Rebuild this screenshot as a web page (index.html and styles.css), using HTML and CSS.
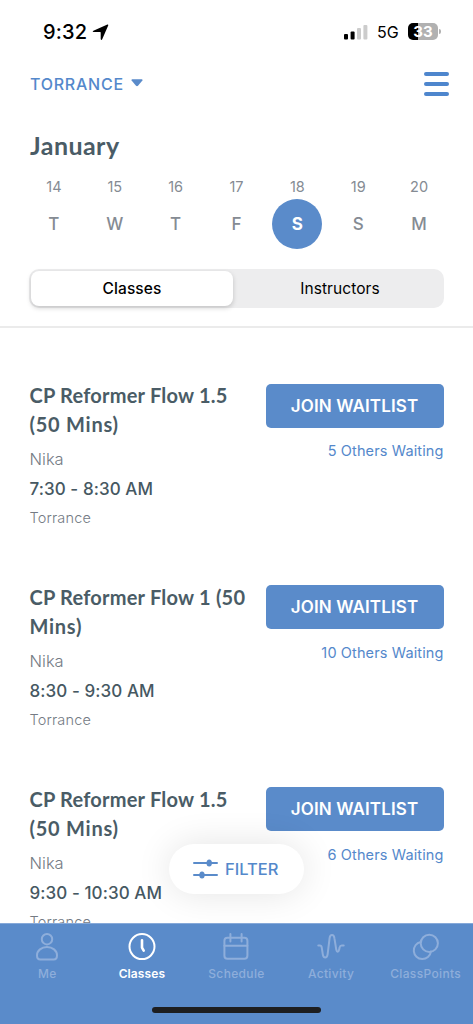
FILE: index.html
```html
<!DOCTYPE html>
<html lang="en">
<head>
<meta charset="utf-8">
<title>Classes</title>
<link rel="stylesheet" href="styles.css">
</head>
<body>
<div class="app">
  <header class="top">
    <div class="status">
      <span class="clock">9:32</span>
      <svg class="loc" width="17" height="17" viewBox="0 0 17 17"><path d="M15.4 .6Q16.5.3 16.2 1.5L10.2 15.3Q9.2 16.9 8.7 15V8.6Q8.7 8.1 8.2 8.1H1.7Q-.2 7.7 1.4 6.7Z"/></svg>
      <svg class="signal" width="25" height="16" viewBox="0 0 25 16"><rect x="0" y="10" width="4" height="5.5" rx="1"/><rect x="6.6" y="7.5" width="4" height="8" rx="1"/><g fill="#ccc"><rect x="13" y="4" width="4" height="11.5" rx="1"/><rect x="19.4" y="1" width="4" height="14.5" rx="1"/></g></svg>
      <span class="net">5G</span>
      <span class="battery"><span class="level">33</span><i class="cap"></i></span>
    </div>
    <div class="bar">
      <span class="place">TORRANCE</span>
      <svg class="caret" width="12" height="8" viewBox="0 0 12 8"><path d="M1.2.3h9.6q1.2.2.6 1.3L7 6.7q-1 .9-2 0L.6 1.6Q0 .5 1.2.3Z"/></svg>
      <div class="menu"><i></i><i></i><i></i></div>
    </div>
    <h1 class="month">January</h1>
    <div class="days">
      <div class="day"><span>14</span><b>T</b></div>
      <div class="day"><span>15</span><b>W</b></div>
      <div class="day"><span>16</span><b>T</b></div>
      <div class="day"><span>17</span><b>F</b></div>
      <div class="day on"><span>18</span><b>S</b></div>
      <div class="day"><span>19</span><b>S</b></div>
      <div class="day"><span>20</span><b>M</b></div>
    </div>
    <div class="segments"><span class="seg active">Classes</span><span class="seg">Instructors</span></div>
  </header>

  <main class="list">
    <article class="item">
      <div class="info"><h2>CP Reformer Flow 1.5<br><span class="wide">(50 Mins)</span></h2><p class="who">Nika</p><p class="time">7:30 - 8:30 AM</p><p class="where">Torrance</p></div>
      <div class="action"><button class="join">JOIN WAITLIST</button><p class="waiting">5 Others Waiting</p></div>
    </article>
    <article class="item">
      <div class="info"><h2>CP Reformer Flow 1 (50<br><span class="wide">Mins)</span></h2><p class="who">Nika</p><p class="time">8:30 - 9:30 AM</p><p class="where">Torrance</p></div>
      <div class="action"><button class="join">JOIN WAITLIST</button><p class="waiting">10 Others Waiting</p></div>
    </article>
    <article class="item">
      <div class="info"><h2>CP Reformer Flow 1.5<br><span class="wide">(50 Mins)</span></h2><p class="who">Nika</p><p class="time">9:30 - 10:30 AM</p><p class="where">Torrance</p></div>
      <div class="action"><button class="join">JOIN WAITLIST</button><p class="waiting">6 Others Waiting</p></div>
    </article>
    <div class="filter">
      <svg width="25" height="20" viewBox="0 0 25 20"><path d="M1 4h23M1 16h23" stroke="#5a8bca" stroke-width="2" stroke-linecap="round"/><ellipse cx="16.2" cy="4" rx="2.7" ry="3.5" fill="#5a8bca"/><ellipse cx="9" cy="16" rx="2.7" ry="3.5" fill="#5a8bca"/></svg>
      <span>FILTER</span>
    </div>
  </main>

  <footer class="tabs">
    <nav class="tabrow">
      <div class="tab"><svg width="28" height="28" viewBox="0 0 28 28"><circle cx="14" cy="6.2" r="5.2"/><path d="M14 14c5.500 0 10 3.500 10 8.400 0 2.600-1 4-3.300 4H7.300C5 26.400 4 25 4 22.400c0-4.900 4.500-8.400 10-8.400Z"/></svg><span>Me</span></div>
      <div class="tab current"><svg width="28" height="28" viewBox="0 0 28 28"><circle cx="14" cy="13.600" r="12.500"/><path d="M14 7.300v7.300l1.700 3" stroke-width="2.600"/></svg><span>Classes</span></div>
      <div class="tab"><svg width="28" height="28" viewBox="0 0 28 28"><rect x="2.400" y="4.800" width="23" height="21" rx="3"/><path d="M2.400 12.800h23M8.400 1v7.500M19.600 1v7.500"/></svg><span>Schedule</span></div>
      <div class="tab"><svg width="28" height="28" viewBox="0 0 28 28"><path d="M1.300 12.600h1.500q1.700 0 2 2.200l1 6.500c.6 4.300 4.200 4.300 4.800 0L12.600 5.200c.5-4.200 4.300-4.200 4.800 0l1.900 11.600c.5 2.600 2.200 2.600 2.800 0l.5-2.300q.4-1.900 2.100-1.900h2"/></svg><span>Activity</span></div>
      <div class="tab"><svg width="28" height="28" viewBox="0 0 28 28"><circle cx="17.300" cy="10.300" r="8.600"/><path d="M8.700 9A8.600 8.600 0 1 0 18.900 18.600"/></svg><span>ClassPoints</span></div>
    </nav>
    <div class="home"></div>
  </footer>
</div>
</body>
</html>
```
FILE: styles.css
```css
* { box-sizing: border-box; margin: 0; padding: 0; }
body { font-family: Inter, "Liberation Sans", sans-serif; background: #fff; overflow: hidden; }
.app { width: 473px; height: 1024px; display: flex; flex-direction: column; }

.top { height: 328px; flex: none; border-bottom: 2px solid #ebebeb; }
.status { height: 62px; padding: 2px 32px 0 43px; display: flex; align-items: center; }
.clock { font-size: 20px; font-weight: 500; width: 49px; letter-spacing: .2px; color: #000; }
.signal { margin-left: auto; }
.net { font-size: 16px; width: 23px; margin: 0 8px 0 8px; letter-spacing: 0; }
.battery { display: flex; align-items: center; margin-top: -2px; }
.level { width: 30px; height: 17px; border-radius: 5px; background: linear-gradient(90deg, #000 33%, #b1b1b1 33%); color: #fff; font-size: 15px; font-weight: 700; line-height: 17px; text-align: center; }
.cap { width: 2px; height: 5px; margin-left: 1px; border-radius: 0 2px 2px 0; background: #b1b1b1; }

.bar { height: 44px; padding: 0 24px 0 30px; display: flex; align-items: center; }
.place { color: #5488cb; font-size: 16px; font-weight: 500; letter-spacing: .75px; }
.caret { margin: -3px 0 0 7px; fill: #5a8bca; }
.menu { margin-left: auto; width: 25px; display: flex; flex-direction: column; gap: 6px; }
.menu i { height: 4px; border-radius: 2px; background: #4e86cd; }

.month { height: 68px; padding: 22px 0 0 30px; font: 700 25px/34px Lato, sans-serif; letter-spacing: .45px; color: #4a5c66; }
.days { height: 75px; padding: 5px 23.500px 0; display: grid; grid-template-columns: repeat(7, 1fr); }
.day { display: flex; flex-direction: column; align-items: center; color: #858b93; }
.day span { font-size: 14.500px; line-height: 16px; height: 20px; }
.day b { width: 50px; height: 50px; flex: none; border-radius: 50%; font-size: 17px; font-weight: 500; line-height: 50px; text-align: center; }
.day.on b { background: #5a8bca; color: #fff; font-weight: 700; }
.segments { margin: 20px 29px 0; height: 39px; padding: 2px; border-radius: 10px; background: #ededee; display: flex; }
.seg { flex: 1; padding-left: 5px; font-size: 15.500px; line-height: 35px; letter-spacing: .08px; text-align: center; color: #000; }
.seg.active { flex: 0 0 202px; padding-left: 0; border-radius: 8px; background: #fff; font-weight: 500; box-shadow: 0 2px 5px rgba(0, 0, 0, .18); }

.list { position: relative; height: 595px; flex: none; overflow: hidden; padding-top: 53px; }
.item { height: 201.800px; padding: 0 29.500px; display: flex; justify-content: space-between; }
.info { white-space: nowrap; }
.info h2 { font: 700 20px/29.400px Lato, sans-serif; letter-spacing: .22px; color: #4a5c66; }
.info .wide { letter-spacing: .75px; }
.who { margin-top: 5.500px; font-size: 16.500px; font-weight: 300; line-height: 29px; color: #747b84; }
.time { font-size: 17px; font-weight: 500; line-height: 30px; letter-spacing: .08px; color: #465862; }
.where { font-size: 14.500px; font-weight: 300; line-height: 28px; letter-spacing: .15px; color: #747b84; }
.action { width: 178px; padding-top: 2.500px; text-align: right; }
.join { display: block; width: 178px; height: 44px; border: 0; border-radius: 5px; background: #5a8bca; color: #fff; font: 600 17px Inter, sans-serif; letter-spacing: .12px; }
.waiting { margin-top: 13.500px; font-size: 14.500px; line-height: 20px; letter-spacing: .12px; color: #5488cb; white-space: nowrap; }
.filter { position: absolute; left: 169px; top: 516px; width: 135px; height: 50px; border-radius: 25px; background: #fff; box-shadow: 0 0 36px rgba(0, 0, 0, .11); display: flex; align-items: center; gap: 7px; padding-left: 24px; color: #5488cb; font-size: 16.500px; font-weight: 500; }

.tabs { position: relative; height: 101px; flex: none; background: #5a8bca; border-top: 1px solid #86a9d9; }
.tabrow { padding-top: 9px; display: grid; grid-template-columns: repeat(5, 94.600px); }
.tab { display: flex; flex-direction: column; align-items: center; color: #8eaedb; font-size: 12px; line-height: 16px; letter-spacing: .35px; font-weight: 500; }
.tab svg { margin-bottom: 5px; fill: none; stroke: currentColor; stroke-width: 2; stroke-linecap: round; stroke-linejoin: round; }
.tab.current { color: #fff; font-weight: 600; letter-spacing: .1px; }
.home { width: 169px; height: 6px; margin: 25px auto 0; border-radius: 3px; background: #1d1e20; }
```
